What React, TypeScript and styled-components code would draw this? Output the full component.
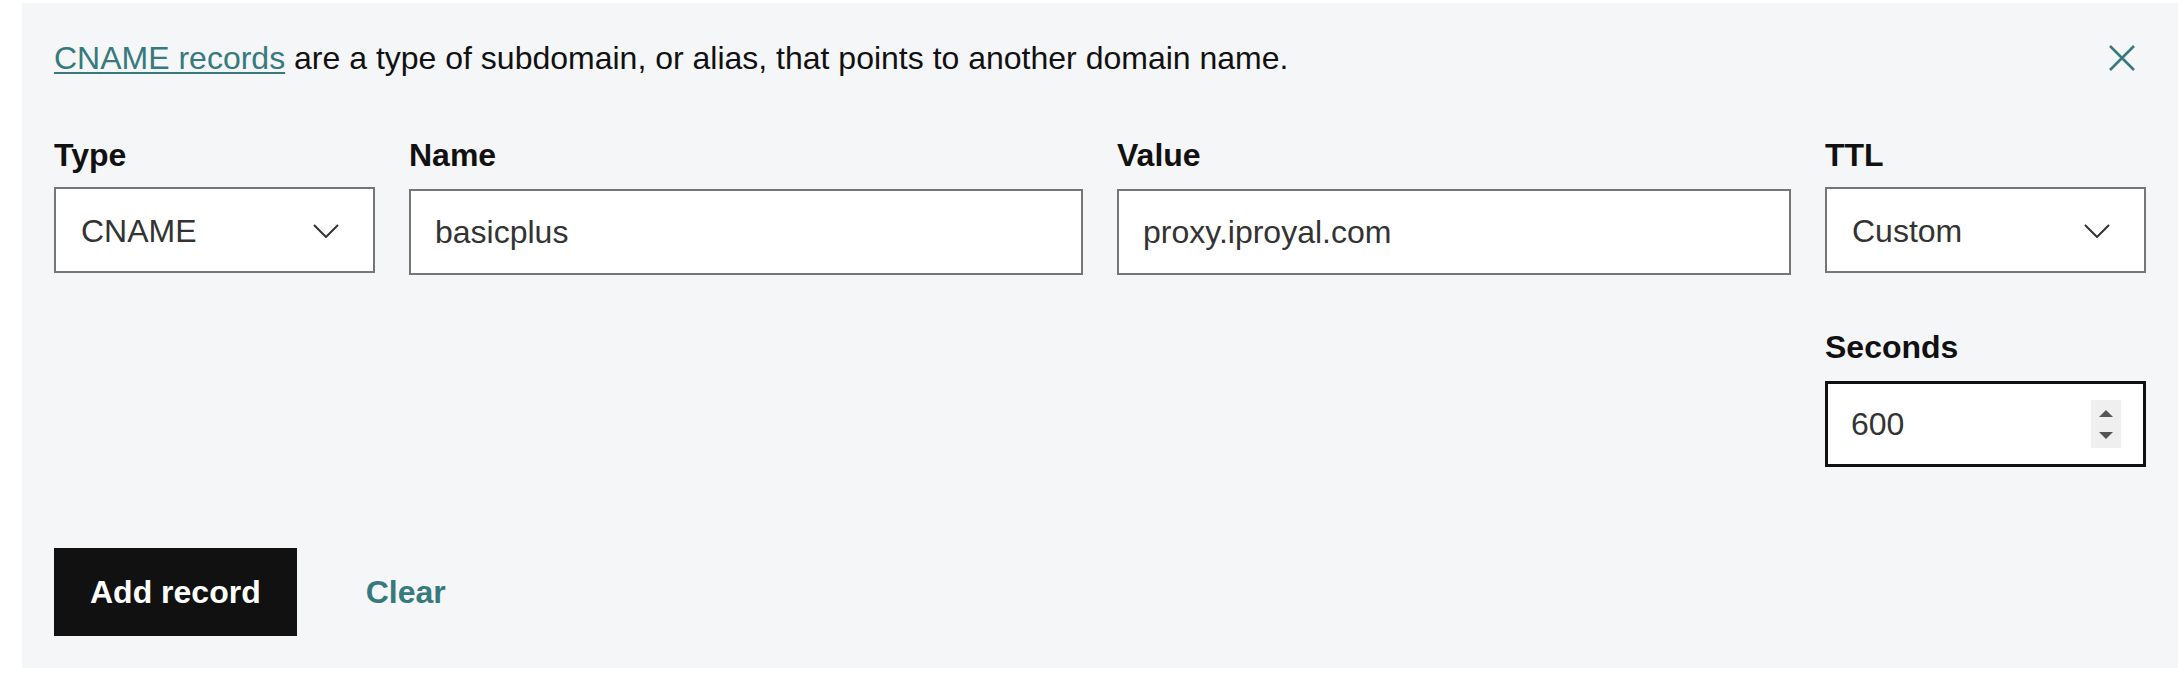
import React from "react";
import styled, { createGlobalStyle } from "styled-components";

const TEAL = "#377a7d";
const FONT = `"Liberation Sans", Arial, Helvetica, sans-serif`;

const GlobalStyle = createGlobalStyle`
  html, body { margin: 0; padding: 0; background: #ffffff; }
  body { padding: 3px 6px 0 22px; font-family: ${FONT}; }
  *, *::before, *::after { box-sizing: border-box; }
`;

const Panel = styled.section`
  background: #f5f6f8;
  padding: 31px 32px 32px;
  color: #111111;
`;

const IntroRow = styled.div`
  display: flex;
  align-items: center;
  justify-content: space-between;
  height: 48px;
`;

const Intro = styled.p`
  margin: 0;
  font-size: 32px;
  line-height: 48px;
  color: #111111;
`;

const InlineLink = styled.a`
  color: ${TEAL};
  text-decoration: underline;
  text-decoration-thickness: 2px;
  text-underline-offset: 3px;
`;

const CloseButton = styled.button`
  width: 48px;
  height: 48px;
  display: flex;
  align-items: center;
  justify-content: center;
  background: none;
  border: 0;
  padding: 0;
  color: ${TEAL};
  cursor: pointer;
`;

const FieldGrid = styled.div`
  margin-top: 53px;
  display: grid;
  grid-template-columns: 321px 1fr 1fr 321px;
  column-gap: 34px;
  row-gap: 52px;
`;

const Field = styled.div<{ $col?: number }>`
  display: flex;
  flex-direction: column;
  min-width: 0;
  ${(p) => (p.$col ? `grid-column: ${p.$col};` : "")}
`;

const Label = styled.label`
  font-size: 32px;
  font-weight: 700;
  line-height: 40px;
  margin-bottom: 12px;
  color: #111111;
`;

const SelectBox = styled.div`
  height: 86px;
  border: 2px solid #767676;
  background: #ffffff;
  display: flex;
  align-items: center;
  justify-content: space-between;
  padding: 2px 34px 0 25px;
  font-size: 32px;
  color: #333333;
  cursor: pointer;
`;

const TextInput = styled.input`
  height: 86px;
  margin-top: 2px;
  width: 100%;
  border: 2px solid #767676;
  border-radius: 0;
  background: #ffffff;
  padding: 0 24px;
  font-family: ${FONT};
  font-size: 32px;
  color: #333333;
  outline: none;
`;

const NumberBox = styled.div`
  height: 86px;
  margin-top: 2px;
  border: 3px solid #111111;
  background: #ffffff;
  display: flex;
  align-items: center;
  padding: 0 22px 0 23px;
`;

const NumberInput = styled.input`
  flex: 1;
  min-width: 0;
  border: 0;
  outline: none;
  background: transparent;
  padding: 0;
  font-family: ${FONT};
  font-size: 32px;
  color: #333333;
  -moz-appearance: textfield;
  &::-webkit-inner-spin-button,
  &::-webkit-outer-spin-button {
    -webkit-appearance: none;
    margin: 0;
  }
`;

const Spinner = styled.div`
  width: 30px;
  height: 48px;
  background: #efefef;
  display: flex;
  flex-direction: column;
  align-items: center;
  justify-content: center;
  gap: 15px;
`;

const Arrow = styled.span<{ $dir: "up" | "down" }>`
  width: 0;
  height: 0;
  border-left: 7.5px solid transparent;
  border-right: 7.5px solid transparent;
  ${(p) =>
    p.$dir === "up"
      ? "border-bottom: 7px solid #555555;"
      : "border-top: 7px solid #555555;"}
`;

const Actions = styled.div`
  margin-top: 81px;
  display: flex;
  align-items: center;
  gap: 69px;
`;

const PrimaryButton = styled.button`
  height: 88px;
  padding: 0 36px;
  background: #111111;
  color: #ffffff;
  border: 0;
  border-radius: 0;
  font-family: ${FONT};
  font-weight: 700;
  font-size: 32px;
  cursor: pointer;
`;

const TextButton = styled.button`
  background: none;
  border: 0;
  padding: 0;
  color: ${TEAL};
  font-family: ${FONT};
  font-weight: 700;
  font-size: 32px;
  cursor: pointer;
`;

const Chevron = () => (
  <svg width="26" height="14" viewBox="0 0 26 14" fill="none">
    <path d="M1 1 L13 13 L25 1" stroke="#333333" strokeWidth="2" />
  </svg>
);

const CloseIcon = () => (
  <svg width="26" height="26" viewBox="0 0 26 26" fill="none">
    <path d="M1 1 L25 25 M25 1 L1 25" stroke="currentColor" strokeWidth="2.6" />
  </svg>
);

export default function App() {
  return (
    <>
      <GlobalStyle />
      <Panel>
        <IntroRow>
          <Intro>
            <InlineLink href="#">CNAME records</InlineLink> are a type of subdomain, or alias, that
            points to another domain name.
          </Intro>
          <CloseButton aria-label="Close">
            <CloseIcon />
          </CloseButton>
        </IntroRow>

        <FieldGrid>
          <Field>
            <Label>Type</Label>
            <SelectBox role="combobox">
              <span>CNAME</span>
              <Chevron />
            </SelectBox>
          </Field>
          <Field>
            <Label>Name</Label>
            <TextInput defaultValue="basicplus" />
          </Field>
          <Field>
            <Label>Value</Label>
            <TextInput defaultValue="proxy.iproyal.com" />
          </Field>
          <Field>
            <Label>TTL</Label>
            <SelectBox role="combobox">
              <span>Custom</span>
              <Chevron />
            </SelectBox>
          </Field>
          <Field $col={4}>
            <Label>Seconds</Label>
            <NumberBox>
              <NumberInput type="number" defaultValue={600} />
              <Spinner>
                <Arrow $dir="up" />
                <Arrow $dir="down" />
              </Spinner>
            </NumberBox>
          </Field>
        </FieldGrid>

        <Actions>
          <PrimaryButton>Add record</PrimaryButton>
          <TextButton>Clear</TextButton>
        </Actions>
      </Panel>
    </>
  );
}
